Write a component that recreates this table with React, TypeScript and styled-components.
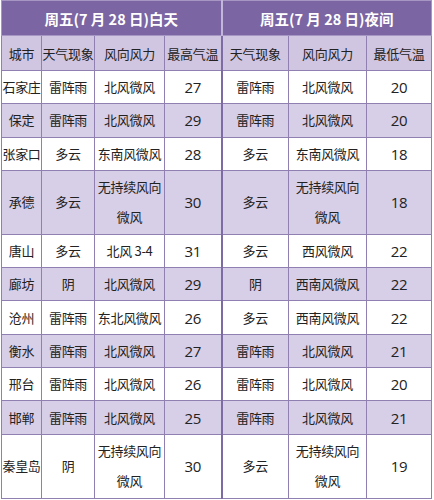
import React from "react";
import styled, { createGlobalStyle } from "styled-components";

const Global = createGlobalStyle`
  html, body { margin: 0; padding: 0; background: #ffffff; }
  body { font-family: "Noto Sans CJK SC", "Noto Sans", sans-serif; }
`;

const Table = styled.table`
  margin: 0 0 0 1px;
  border-collapse: collapse;
  table-layout: fixed;
  width: 430px;
  font-family: "Noto Sans CJK SC", "Noto Sans", sans-serif;
  color: #222222;
  border: 1px solid #a99cc4;
`;

const TitleCell = styled.th<{ $split?: boolean }>`
  height: 34px;
  padding: 0;
  background: #7b65a3;
  color: #ffffff;
  font-size: 14.5px;
  font-weight: 700;
  text-align: center;
  border: 1px solid #a596c4;
  border-right: ${(p) => (p.$split ? "2px solid #c2b7da" : "1px solid #a596c4")};
`;

const HeadCell = styled.th<{ $split?: boolean }>`
  height: 34px;
  padding: 0;
  background: #d0c6e2;
  font-size: 13px;
  font-weight: 400;
  text-align: center;
  white-space: nowrap;
  letter-spacing: -0.3px;
  border: 1px solid #8f80b1;
  border-right: ${(p) => (p.$split ? "2px solid #7d6ca3" : "1px solid #8f80b1")};
`;

const Row = styled.tr<{ $shade: boolean; $tall: boolean }>`
  background: ${(p) => (p.$shade ? "#d7cee7" : "#ffffff")};
  height: ${(p) => (p.$tall ? "64px" : "33.3px")};
`;

const Cell = styled.td<{ $split?: boolean; $num?: boolean }>`
  padding: 0;
  text-align: center;
  font-size: ${(p) => (p.$num ? "15px" : "13px")};
  font-family: ${(p) =>
    p.$num ? `"Open Sans", "Noto Sans", sans-serif` : `"Noto Sans CJK SC", "Noto Sans", sans-serif`};
  white-space: nowrap;
  letter-spacing: -0.3px;
  line-height: 20px;
  border: 1px solid #8f80b1;
  border-right: ${(p) => (p.$split ? "2px solid #7d6ca3" : "1px solid #8f80b1")};
`;

const Line = styled.div`
  line-height: 30px;
`;

type Rec = [string, string, string, string, string, string, string];

const rows: Rec[] = [
  ["石家庄", "雷阵雨", "北风微风", "27", "雷阵雨", "北风微风", "20"],
  ["保定", "雷阵雨", "北风微风", "29", "雷阵雨", "北风微风", "20"],
  ["张家口", "多云", "东南风微风", "28", "多云", "东南风微风", "18"],
  ["承德", "多云", "无持续风向|微风", "30", "多云", "无持续风向|微风", "18"],
  ["唐山", "多云", "北风 3-4", "31", "多云", "西风微风", "22"],
  ["廊坊", "阴", "北风微风", "29", "阴", "西南风微风", "22"],
  ["沧州", "雷阵雨", "东北风微风", "26", "多云", "西南风微风", "22"],
  ["衡水", "雷阵雨", "北风微风", "27", "雷阵雨", "北风微风", "21"],
  ["邢台", "雷阵雨", "北风微风", "26", "雷阵雨", "北风微风", "20"],
  ["邯郸", "雷阵雨", "北风微风", "25", "雷阵雨", "北风微风", "21"],
  ["秦皇岛", "阴", "无持续风向|微风", "30", "多云", "无持续风向|微风", "19"],
];

const widths = [40, 53, 70, 57, 67, 78, 65];

function Text({ v }: { v: string }) {
  if (v.includes("|")) {
    return (
      <>
        {v.split("|").map((s) => (
          <Line key={s}>{s}</Line>
        ))}
      </>
    );
  }
  return <>{v}</>;
}

export default function App() {
  return (
    <>
      <Global />
      <Table>
        <colgroup>
          {widths.map((w, i) => (
            <col key={i} style={{ width: w }} />
          ))}
        </colgroup>
        <thead>
          <tr>
            <TitleCell colSpan={4} $split>
              周五(7 月 28 日)白天
            </TitleCell>
            <TitleCell colSpan={3}>周五(7 月 28 日)夜间</TitleCell>
          </tr>
          <tr>
            <HeadCell>城市</HeadCell>
            <HeadCell>天气现象</HeadCell>
            <HeadCell>风向风力</HeadCell>
            <HeadCell $split>最高气温</HeadCell>
            <HeadCell>天气现象</HeadCell>
            <HeadCell>风向风力</HeadCell>
            <HeadCell>最低气温</HeadCell>
          </tr>
        </thead>
        <tbody>
          {rows.map((r, i) => (
            <Row key={r[0]} $shade={i % 2 === 1} $tall={r[2].includes("|")}>
              <Cell>{r[0]}</Cell>
              <Cell>{r[1]}</Cell>
              <Cell>
                <Text v={r[2]} />
              </Cell>
              <Cell $num $split>
                {r[3]}
              </Cell>
              <Cell>{r[4]}</Cell>
              <Cell>
                <Text v={r[5]} />
              </Cell>
              <Cell $num>{r[6]}</Cell>
            </Row>
          ))}
        </tbody>
      </Table>
    </>
  );
}
